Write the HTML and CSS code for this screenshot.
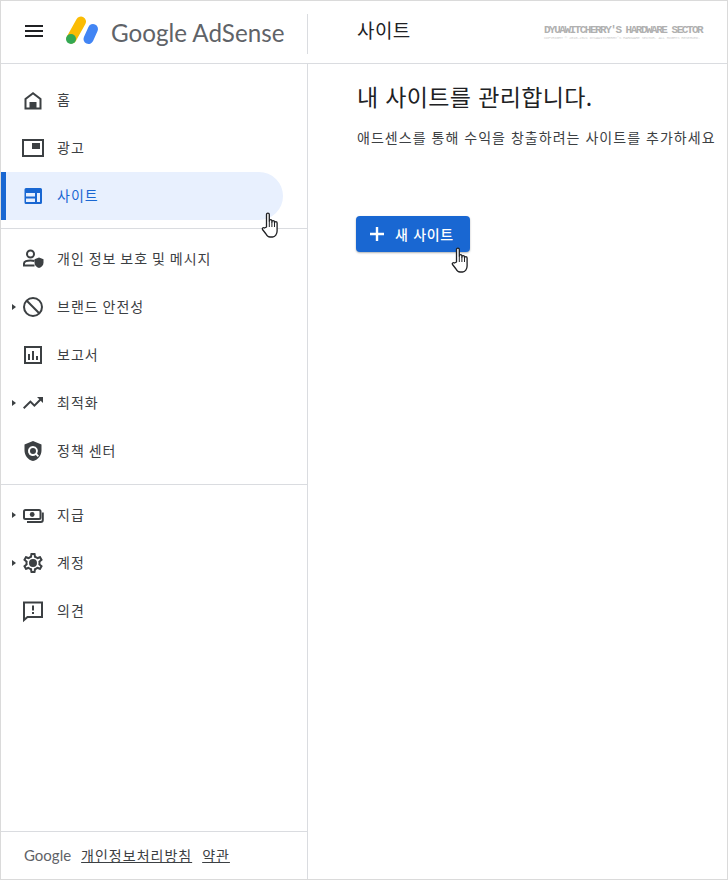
FILE: index.html
```html
<!DOCTYPE html>
<html lang="ko">
<head>
<meta charset="utf-8">
<title>Google AdSense 사이트</title>
<link rel="stylesheet" href="styles.css">
</head>
<body>
<svg class="defs" width="0" height="0" aria-hidden="true">
  <symbol id="hand" viewBox="0 0 18 26">
    <path d="M5.500 15V2.500a1.400 1.400 0 0 1 2.800 0V9a1.300 1.300 0 0 1 2.600 0v1a1.300 1.300 0 0 1 2.600 0v1a1.300 1.300 0 0 1 2.600 0v8c0 3-2 6-4.500 6H9c-2 0-3-1-4-3l-3.500-4.500c-.8-1.200.7-2.600 2-1.500z" fill="#fff" stroke="#202124" stroke-width="1.300" stroke-linejoin="round"/>
    <path d="M8.300 9v6M10.900 10v5M13.500 11v4" fill="none" stroke="#202124" stroke-width="1"/>
  </symbol>
</svg>
<div class="frame">
  <header class="topbar">
    <div class="brand">
      <div class="burger"><span></span><span></span><span></span></div>
      <svg class="logo" width="36" height="32" viewBox="0 0 36 32">
        <path d="M6.500 23.500L16 6.500" stroke="#fbbc04" stroke-width="10" stroke-linecap="round"/>
        <path d="M23.500 24L28 14" stroke="#4285f4" stroke-width="10" stroke-linecap="round"/>
        <circle cx="6" cy="24" r="5" fill="#34a853"/>
      </svg>
      <span class="wordmark">Google AdSense</span>
    </div>
    <div class="page-title">사이트</div>
    <div class="watermark">
      <div class="wm-main">DYUAWITCHERRY'S HARDWARE SECTOR</div>
      <div class="wm-sub">COPYRIGHT © 2010-2021 DYUAWITCHERRY'S HARDWARE SECTOR. ALL RIGHTS RESERVED.</div>
    </div>
  </header>
  <div class="body">
    <aside class="sidebar">
      <nav class="group group-a">
        <a class="item"><span class="caret-slot"></span>
          <svg class="icon" viewBox="0 0 24 24"><path class="line" d="M12 5.200L4.500 11v9.500h15V11z"/><rect x="8.500" y="14" width="7" height="7"/></svg>
          <span>홈</span></a>
        <a class="item"><span class="caret-slot"></span>
          <svg class="icon" viewBox="0 0 24 24"><rect class="line" x="2" y="4" width="20" height="16"/><rect x="11" y="7" width="8" height="6"/></svg>
          <span>광고</span></a>
        <a class="item active"><span class="caret-slot"></span>
          <svg class="icon" viewBox="0 0 24 24"><path d="M5 4h14.500a1.500 1.500 0 0 1 1.500 1.500v13a1.500 1.500 0 0 1-1.500 1.500H5a1.500 1.500 0 0 1-1.500-1.500v-13A1.500 1.500 0 0 1 5 4zm0 5v3.500h9V9zm0 5.500V18h9v-3.500zM16 9v9h3V9z" fill-rule="evenodd"/></svg>
          <span>사이트</span></a>
      </nav>
      <nav class="group group-b">
        <a class="item"><span class="caret-slot"></span>
          <svg class="icon" viewBox="0 0 24 24"><circle class="line" cx="9.500" cy="7" r="3.500"/><path class="line" d="M13.500 14c-1.200-.4-2.600-.6-4-.6-3.500 0-6.500 1.300-6.500 3.100v2h10.500"/><path d="M18 10.500l4.500 1.800v3.200c0 2.800-1.900 4.900-4.500 5.500-2.600-.6-4.500-2.700-4.500-5.500v-3.200z"/></svg>
          <span class="spaced">개인 정보 보호 및 메시지</span></a>
        <a class="item"><span class="caret-slot"><i class="caret"></i></span>
          <svg class="icon" viewBox="0 0 24 24"><circle class="line" cx="12" cy="12" r="9"/><path class="line" d="M5.800 5.800l12.400 12.400"/></svg>
          <span class="spaced">브랜드 안전성</span></a>
        <a class="item"><span class="caret-slot"></span>
          <svg class="icon" viewBox="0 0 24 24"><rect class="line" x="4" y="4" width="16" height="16"/><rect x="7" y="11" width="2" height="6"/><rect x="11" y="8" width="2" height="9"/><rect x="15" y="13" width="2" height="4"/></svg>
          <span>보고서</span></a>
        <a class="item"><span class="caret-slot"><i class="caret"></i></span>
          <svg class="icon" viewBox="0 0 24 24"><path d="M16 6l2.300 2.300-4.900 4.900-4-4L2 16.600 3.400 18l6-6 4 4 6.300-6.300L22 12V6z"/></svg>
          <span>최적화</span></a>
        <a class="item"><span class="caret-slot"></span>
          <svg class="icon" viewBox="0 0 24 24"><path d="M12 2L3.500 5.500v6c0 5 3.600 9.500 8.500 10.500 4.900-1 8.500-5.500 8.500-10.500v-6zm0 5a5 5 0 0 1 4.100 7.800l1.900 1.900-1.300 1.300-1.900-1.900A5 5 0 1 1 12 7zm0 2a3 3 0 1 0 0 6 3 3 0 0 0 0-6z" fill-rule="evenodd"/></svg>
          <span class="spaced">정책 센터</span></a>
      </nav>
      <nav class="group group-c">
        <a class="item"><span class="caret-slot"><i class="caret"></i></span>
          <svg class="icon" viewBox="0 0 24 24"><rect class="line" x="3" y="7" width="16.500" height="9" rx="1.500"/><circle cx="11.200" cy="11.500" r="2.400"/><path class="line" d="M21.800 9.500V17a2 2 0 0 1-2 2H6"/></svg>
          <span>지급</span></a>
        <a class="item"><span class="caret-slot"><i class="caret"></i></span>
          <svg class="icon" viewBox="0 0 24 24"><path d="M19.430 12.980c.04-.32.070-.64.070-.98s-.03-.66-.07-.98l2.110-1.650c.19-.15.240-.42.120-.64l-2-3.460c-.12-.22-.39-.3-.61-.22l-2.490 1c-.52-.4-1.080-.73-1.690-.98l-.38-2.650C14.460 2.180 14.250 2 14 2h-4c-.25 0-.46.180-.49.420l-.38 2.650c-.61.25-1.170.59-1.690.98l-2.490-1c-.23-.09-.49 0-.61.220l-2 3.460c-.13.220-.07.490.12.640l2.110 1.650c-.04.320-.07.650-.07.980s.03.660.07.980l-2.110 1.650c-.19.150-.24.420-.12.640l2 3.460c.12.220.39.300.61.220l2.490-1c.52.400 1.080.730 1.690.980l.38 2.650c.03.240.24.420.49.420h4c.25 0 .46-.180.49-.420l.38-2.650c.61-.250 1.170-.590 1.690-.980l2.490 1c.23.090.49 0 .61-.220l2-3.460c.12-.220.07-.490-.12-.640zM17.450 11.270c.04.310.05.520.05.730s-.02.430-.05.730l-.14 1.130.89.700 1.080.840-.7 1.210-1.270-.510-1.040-.420-.9.680c-.43.320-.84.560-1.250.730l-1.060.430-.16 1.130-.2 1.350h-1.400l-.19-1.350-.16-1.130-1.060-.430c-.43-.180-.83-.410-1.230-.710l-.91-.700-1.060.430-1.270.510-.7-1.210 1.080-.840.89-.700-.14-1.130c-.03-.310-.05-.540-.05-.740s.02-.430.05-.730l.14-1.130-.89-.700-1.080-.840.7-1.210 1.270.510 1.040.420.9-.680c.43-.320.84-.560 1.250-.730l1.060-.430.16-1.130.2-1.350h1.390l.19 1.350.16 1.130 1.060.430c.43.180.83.410 1.230.710l.91.700 1.060-.430 1.270-.510.7 1.210-1.070.850-.89.700zM12 8a4 4 0 1 0 0 8 4 4 0 0 0 0-8z"/></svg>
          <span>계정</span></a>
        <a class="item"><span class="caret-slot"></span>
          <svg class="icon" viewBox="0 0 24 24"><path class="line" d="M3 3.500h18v14.500H6.500L3 21z"/><rect x="11" y="6.500" width="2" height="5"/><rect x="11" y="13" width="2" height="2"/></svg>
          <span>의견</span></a>
      </nav>
      <footer class="foot">
        <span class="foot-google">Google</span>
        <a class="foot-link">개인정보처리방침</a>
        <a class="foot-link">약관</a>
      </footer>
    </aside>
    <main class="main">
      <h1 class="heading">내 사이트를 관리합니다.</h1>
      <p class="lead">애드센스를 통해 수익을 창출하려는 사이트를 추가하세요</p>
      <button class="new-site">
        <svg class="plus" width="14" height="14" viewBox="0 0 14 14"><path d="M5.800 0h2.400v5.800H14v2.400H8.200V14H5.800V8.200H0V5.800h5.800z"/></svg>
        <span>새 사이트</span>
      </button>
    </main>
  </div>
  <svg class="cursor cursor-a" width="18" height="26"><use href="#hand"/></svg>
  <svg class="cursor cursor-b" width="18" height="26"><use href="#hand"/></svg>
</div>
</body>
</html>
```
FILE: styles.css
```css
* { box-sizing: border-box; }
html, body { margin: 0; height: 100%; }
body {
  font-family: "Noto Sans CJK KR", "Noto Sans", sans-serif;
  color: #3c4043;
  background: #fff;
}
.defs { position: absolute; }
.frame {
  position: relative;
  width: 728px;
  height: 880px;
  border: 1px solid #dadada;
  display: flex;
  flex-direction: column;
  overflow: hidden;
}
.topbar {
  height: 63px;
  flex: none;
  display: flex;
  align-items: center;
  border-bottom: 1px solid #dadce0;
  padding-right: 24px;
}
.brand {
  width: 307px;
  height: 40px;
  margin-top: 3px;
  flex: none;
  display: flex;
  align-items: center;
  padding-left: 24px;
  border-right: 1px solid #dadce0;
}
.burger { width: 18px; display: flex; flex-direction: column; gap: 3px; margin-top: -6px; }
.burger span { display: block; height: 2px; background: #202124; }
.logo { margin-left: 22px; margin-top: -6px; flex: none; }
.wordmark {
  margin-left: 10px;
  margin-top: -2px;
  font-family: "Lato", sans-serif;
  font-size: 24.2px;
  color: #5f6368;
  white-space: nowrap;
}
.page-title {
  margin-left: 49px;
  font-size: 19px;
  line-height: 24px;
  letter-spacing: .4px;
  margin-top: -4px;
  color: #202124;
}
.watermark {
  margin-left: auto;
  margin-top: 2px;
  width: 159px;
  font-family: "Liberation Mono", monospace;
  white-space: nowrap;
}
.wm-main {
  font-size: 11px;
  line-height: 10px;
  font-weight: 700;
  letter-spacing: -1.5px;
  color: #b0b0b0;
}
.wm-sub {
  font-size: 4px;
  line-height: 6px;
  letter-spacing: -0.32px;
  color: #cfcfcf;
}
.body { flex: 1; display: flex; min-height: 0; }
.sidebar {
  width: 307px;
  flex: none;
  border-right: 1px solid #dadce0;
  display: flex;
  flex-direction: column;
}
.group-a { padding: 12px 0 8px; border-bottom: 1px solid #dadce0; }
.group-b { padding: 6px 0 9px; border-bottom: 1px solid #dadce0; }
.group-c { padding: 6px 0 0; }
.item {
  display: flex;
  align-items: center;
  height: 48px;
  width: 282px;
  padding-left: 10px;
  font-size: 14px;
  letter-spacing: 1px;
  color: #3c4043;
  white-space: nowrap;
}
.item span:last-child { margin-left: 12px; margin-top: -3px; }
.item .spaced { word-spacing: -1px; }
.caret-slot { width: 10px; flex: none; display: flex; }
.caret {
  width: 0; height: 0;
  margin-left: 1px;
  border-left: 4px solid #3c4043;
  border-top: 3.5px solid transparent;
  border-bottom: 3.5px solid transparent;
}
.icon { width: 24px; height: 24px; fill: #3c4043; flex: none; }
.line { fill: none; stroke: #3c4043; stroke-width: 2; }
.active {
  background: #e8f0fe;
  border-left: 5px solid #1967d2;
  border-radius: 0 24px 24px 0;
  padding-left: 5px;
  color: #1967d2;
}
.active .icon { fill: #1967d2; }
.foot {
  margin-top: auto;
  height: 48px;
  border-top: 1px solid #dadce0;
  padding: 0 0 2px 23px;
  display: flex;
  align-items: center;
  gap: 10px;
  font-size: 14px;
}
.foot-google {
  font-family: "Lato", sans-serif;
  font-size: 15px;
  color: #5f6368;
}
.foot-link { color: #3c4043; text-decoration: underline; letter-spacing: 1px; }
.main { flex: 1; padding: 18px 0 0 49px; min-width: 0; white-space: nowrap; }
.heading {
  margin: 0;
  font-size: 23px;
  line-height: 28px;
  font-weight: 400;
  letter-spacing: .35px;
  color: #202124;
}
.lead {
  margin: 17px 0 0;
  font-size: 14px;
  line-height: 20px;
  letter-spacing: 1.03px;
  color: #3c4043;
}
.new-site {
  display: flex;
  align-items: center;
  gap: 11px;
  margin: 69px 0 0 -1px;
  width: 114px;
  height: 36px;
  padding: 0 0 0 14px;
  border: 0;
  border-radius: 4px;
  background: #1967d2;
  box-shadow: 0 1px 2px rgba(60, 64, 67, .4);
  color: #fff;
  letter-spacing: .7px;
  font: 500 14px "Noto Sans CJK KR", sans-serif;
}
.plus { fill: #fff; flex: none; }
.cursor { position: absolute; }
.cursor-a { left: 260px; top: 211px; }
.cursor-b { left: 450px; top: 246px; }
```
